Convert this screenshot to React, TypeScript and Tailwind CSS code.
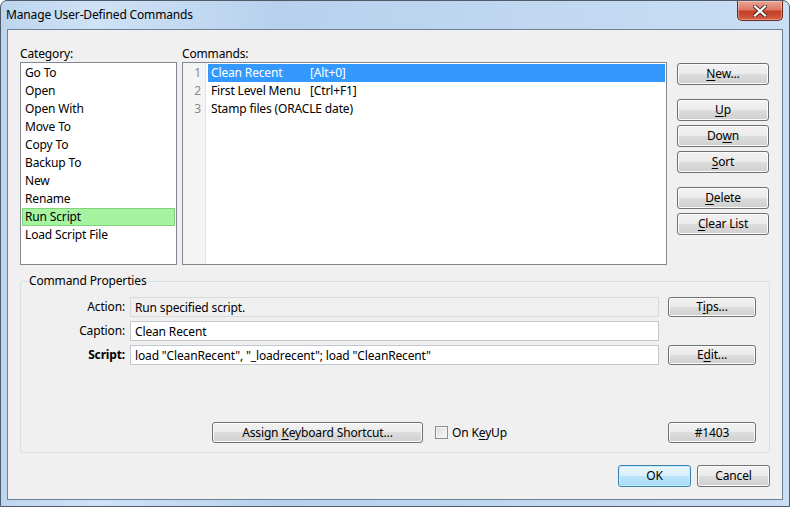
import React from 'react';

const btn =
  "flex items-center justify-center h-[22px] rounded-[3px] border border-[#707070] bg-[linear-gradient(#f2f2f2_0%,#ebebeb_49%,#dddddd_50%,#cfcfcf_100%)] shadow-[inset_0_0_0_1px_#fbfbfb] text-[12px] text-black whitespace-pre";

function U({ children }: { children: React.ReactNode }) {
    return <span className="underline underline-offset-[2px]">{children}</span>;
}

const categories = ["Go To", "Open", "Open With", "Move To", "Copy To", "Backup To", "New", "Rename", "Run Script", "Load Script File"];

const commands = [
    { name: "Clean Recent", key: "[Alt+0]" },
    { name: "First Level Menu", key: "[Ctrl+F1]" },
    { name: "Stamp files (ORACLE date)", key: "" },
];

function CloseButton() {
    return (
        <div className="mr-[6px] flex h-[20px] w-[46px] items-center justify-center rounded-b-[5px] border border-t-0 border-[#6e2a20] bg-[linear-gradient(#eba595_0%,#dc7a63_45%,#c43f26_55%,#d45f44_100%)] shadow-[inset_0_0_0_1px_rgba(255,255,255,0.35)]">
            <svg width="14" height="12" viewBox="0 0 14 12">
                <path d="M2 1.5 L12 10.5 M12 1.5 L2 10.5" stroke="#4a2a24" strokeWidth="4" strokeLinecap="square" />
                <path d="M2 1.5 L12 10.5 M12 1.5 L2 10.5" stroke="#ffffff" strokeWidth="2.2" strokeLinecap="square" />
            </svg>
        </div>
    );
}

function App() {
    return (
        <div className="h-[507px] w-[790px] overflow-hidden bg-white font-['Noto_Sans',sans-serif] text-[12px] tracking-[-0.15px] text-black">
            <div className="flex h-[507px] w-[790px] flex-col rounded-t-[7px] border border-[#4f5b68] bg-[linear-gradient(90deg,#bcd5ee_0%,#cfe2f6_12%,#b7d1ed_35%,#bfd7f0_65%,#c9def4_100%)]">
                <div className="flex h-[28px] items-start justify-between">
                    <div className="pl-[5px] pt-[6px] leading-[16px] text-[12px] text-black">Manage User-Defined Commands</div>
                    <CloseButton />
                </div>
                <div className="mx-[6px] flex h-[471px] flex-col border border-[#6d8095] bg-[#f0f0f0] pl-[12px] pt-[16px]">
                    {/* top area */}
                    <div className="flex">
                        <div className="w-[157px]">
                            <div className="h-[16px] leading-[15px]">Category:</div>
                            <div className="h-[203px] border border-[#828790] bg-white p-[1px]">
                                {categories.map((c) => (
                                    <div
                                        key={c}
                                        className={c === "Run Script"
                                            ? "h-[18px] border border-[#7fd47a] bg-[#a6f4a1] pl-[2px] leading-[16px]"
                                            : "h-[18px] border border-transparent pl-[2px] leading-[16px]"}
                                    >
                                        {c}
                                    </div>
                                ))}
                            </div>
                        </div>
                        <div className="ml-[5px] w-[485px]">
                            <div className="h-[16px] leading-[15px]">Commands:</div>
                            <div className="flex h-[203px] border border-[#828790] bg-white">
                                <div className="w-[23px] border-r border-[#e2e2e2] bg-[#f4f4f4] pt-[1px]">
                                    {commands.map((c, i) => (
                                        <div key={c.name} className="h-[18px] pr-[4px] text-right leading-[18px] text-[#8a8a8a]">{i + 1}</div>
                                    ))}
                                </div>
                                <div className="ml-[2px] flex-1 pr-[1px] pt-[1px]">
                                    {commands.map((c, i) => (
                                        <div
                                            key={c.name}
                                            className={i === 0
                                                ? "flex h-[18px] bg-[#3399ff] pl-[3px] leading-[18px] text-white"
                                                : "flex h-[18px] pl-[3px] leading-[18px]"}
                                        >
                                            <span className="w-[99px] whitespace-nowrap">{c.name}</span>
                                            <span className="whitespace-nowrap">{c.key}</span>
                                        </div>
                                    ))}
                                </div>
                            </div>
                        </div>
                        <div className="ml-[10px] flex w-[92px] flex-col pt-[17px]">
                            <div className={btn}><span><U>N</U>ew...</span></div>
                            <div className={`${btn} mt-[14px]`}><span><U>U</U>p</span></div>
                            <div className={`${btn} mt-[4px]`}><span>Do<U>w</U>n</span></div>
                            <div className={`${btn} mt-[4px]`}><span><U>S</U>ort</span></div>
                            <div className={`${btn} mt-[14px]`}><span><U>D</U>elete</span></div>
                            <div className={`${btn} mt-[4px]`}><span><U>C</U>lear List</span></div>
                        </div>
                    </div>

                    {/* command properties */}
                    <div className="relative mt-[16px] h-[172px] w-[750px] rounded-[3px] border border-[#d5dfe5] pt-[15px]">
                        <div className="absolute left-[7px] top-[-9px] bg-[#f0f0f0] px-[1px] leading-[16px]">Command Properties</div>
                        <div className="flex h-[20px] items-center">
                            <div className="w-[104px] text-right">Action:</div>
                            <div className="ml-[5px] flex h-[20px] w-[529px] items-center border border-[#d9d9d9] bg-[#f0f0f0] pl-[4px] pt-[1px]">Run specified script.</div>
                            <div className={`${btn} ml-[9px] !h-[20px] w-[88px]`}><span>T<U>i</U>ps...</span></div>
                        </div>
                        <div className="mt-[4px] flex h-[20px] items-center">
                            <div className="w-[104px] text-right">Caption:</div>
                            <div className="ml-[5px] flex h-[20px] w-[529px] items-center border border-[#c3c8cf] bg-white pl-[4px] pt-[1px]">Clean Recent</div>
                        </div>
                        <div className="mt-[4px] flex h-[20px] items-center">
                            <div className="w-[104px] text-right font-bold">Script:</div>
                            <div className="ml-[5px] flex h-[20px] w-[529px] items-center whitespace-nowrap border border-[#c3c8cf] bg-white pl-[4px] pt-[1px]">load "CleanRecent", "_loadrecent"; load "CleanRecent"</div>
                            <div className={`${btn} ml-[9px] !h-[20px] w-[88px]`}><span>E<U>d</U>it...</span></div>
                        </div>
                        <div className="mt-[57px] flex h-[21px] items-center">
                            <div className={`${btn} ml-[191px] !h-[21px] w-[211px]`}><span>Assign <U>K</U>eyboard Shortcut...</span></div>
                            <div className="ml-[12px] h-[13px] w-[13px] border border-[#8e8f8f] bg-[linear-gradient(135deg,#dcdcdc,#fbfbfb)] shadow-[inset_0_0_0_1px_#f4f4f4]" />
                            <div className="ml-[4px]">On K<U>e</U>yUp</div>
                            <div className={`${btn} ml-auto mr-[13px] !h-[21px] w-[88px]`}>#1403</div>
                        </div>
                    </div>

                    {/* dialog buttons */}
                    <div className="mt-[12px] flex justify-end pr-[12px]">
                        <div className="flex h-[22px] w-[73px] items-center justify-center rounded-[3px] border border-[#3c7fb1] bg-[linear-gradient(#eaf6fd_0%,#d9f0fc_49%,#bee6fd_50%,#a7d9f5_100%)] shadow-[inset_0_0_0_1px_#c4f0fd]">OK</div>
                        <div className={`${btn} ml-[6px] w-[73px]`}>Cancel</div>
                    </div>
                </div>
            </div>
        </div>
    );
}

export default App;
